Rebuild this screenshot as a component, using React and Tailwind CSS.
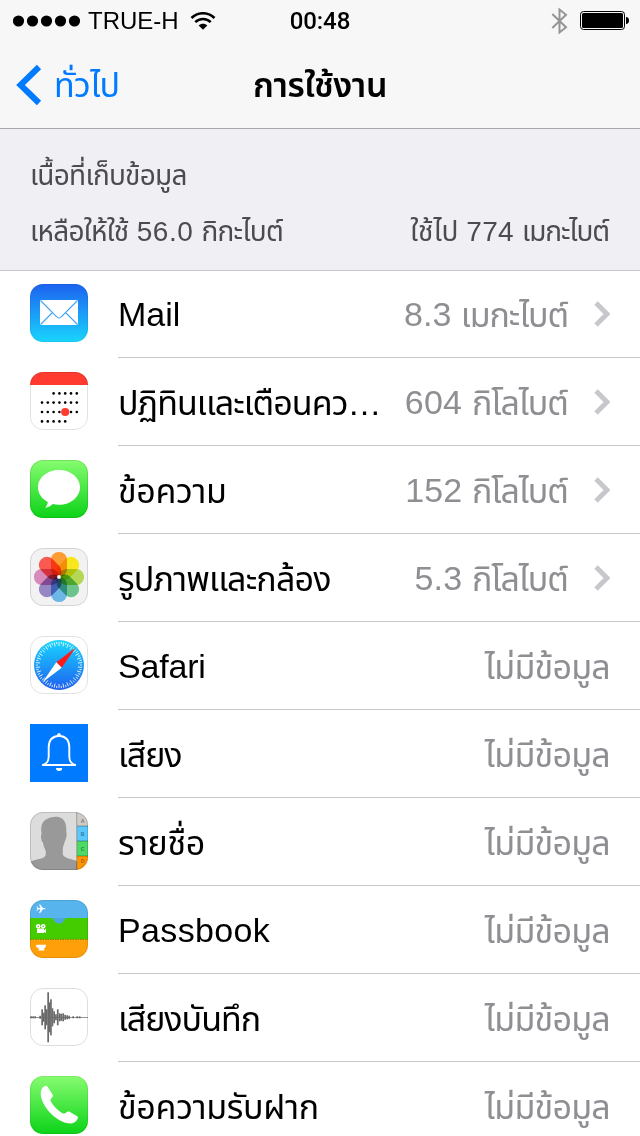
const R = 13;

function Tile({ id, children, outline, square }) {
  return (
    <svg width="58" height="58" viewBox="0 0 58 58" className="block shrink-0" aria-hidden="true">
      <defs>
        <clipPath id={`clip-${id}`}>
          <rect width="58" height="58" rx={square ? 0 : R} />
        </clipPath>
        <linearGradient id="green" x1="0" y1="0" x2="0" y2="1">
          <stop offset="0" stopColor="#87fc70" />
          <stop offset="1" stopColor="#0bd318" />
        </linearGradient>
        <linearGradient id="blue" x1="0" y1="0" x2="0" y2="1">
          <stop offset="0" stopColor="#1d62f0" />
          <stop offset="1" stopColor="#19d5fd" />
        </linearGradient>
        <linearGradient id="compass" x1="0" y1="0" x2="0" y2="1">
          <stop offset="0" stopColor="#19d7ff" />
          <stop offset="1" stopColor="#1e5fef" />
        </linearGradient>
      </defs>
      <g clipPath={`url(#clip-${id})`}>{children}</g>
      {outline && (
        <rect x="0.5" y="0.5" width="57" height="57" rx={R - 0.5} fill="none" stroke="#000" strokeOpacity={outline} />
      )}
    </svg>
  );
}

function MailIcon() {
  return (
    <Tile id="mail" outline={0.06}>
      <rect width="58" height="58" fill="url(#blue)" />
      <rect x="10" y="16" width="38" height="25" rx="1" fill="#fff" />
      <path d="M10.5 16.5 L26.5 32.5 Q29 35.5 31.5 32.5 L47.5 16.5 M10.5 40.5 L22.5 28.5 M47.5 40.5 L35.5 28.5" fill="none" stroke="#3fa4f6" strokeWidth="1.1" />
    </Tile>
  );
}

const CAL_ROWS = [
  [21.4, 2, 6],
  [30.6, 0, 6],
  [40, 0, 6],
  [49.4, 0, 4],
];

function CalendarIcon() {
  return (
    <Tile id="calendar" outline={0.11}>
      <rect width="58" height="58" fill="#fff" />
      {CAL_ROWS.flatMap(([y, from, to]) =>
        [0, 1, 2, 3, 4, 5, 6]
          .filter((c) => c >= from && c <= to)
          .map((c) => <circle key={`${y}-${c}`} cx={12 + c * 5.8} cy={y} r="1.3" fill="#000" />)
      )}
      <circle cx="35.2" cy="40" r="4.1" fill="#ff3b30" />
      <rect width="58" height="13" fill="#ff3b30" />
    </Tile>
  );
}

function MessagesIcon() {
  return (
    <Tile id="messages" outline={0.1}>
      <rect width="58" height="58" fill="url(#green)" />
      <path d="M29 10 C40.6 10 50 17.6 50 27.3 C50 37 40.6 44.8 29 44.8 C26.8 44.8 24.6 44.5 22.6 44 C21 45.8 18.6 47.6 15 47.7 C16.7 46.3 17.7 44 17.8 42.1 C12 39 8 33.6 8 27.3 C8 17.6 17.4 10 29 10 Z" fill="#fff" />
    </Tile>
  );
}

const PETALS = ["#fb9d32", "#f8e71e", "#b4d755", "#6cc48c", "#6cb7e6", "#9786c4", "#d88abb", "#fb5a52"];

function PhotosIcon() {
  return (
    <Tile id="photos" outline={0.12}>
      <rect width="58" height="58" fill="#f2f2f2" />
      <g className="isolate">
        {PETALS.map((c, i) => (
          <rect key={c} x="21" y="4" width="16" height="25" rx="7.6" fill={c} transform={`rotate(${i * 45} 29 29)`} className="mix-blend-multiply" />
        ))}
      </g>
      <circle cx="29" cy="29" r="1.9" fill="#fff" />
    </Tile>
  );
}

function SafariIcon() {
  return (
    <Tile id="safari" outline={0.11}>
      <rect width="58" height="58" fill="#fff" />
      <circle cx="29" cy="29" r="25" fill="url(#compass)" />
      {Array.from({ length: 60 }, (_, i) => (
        <line key={i} x1="29" y1="5.8" x2="29" y2={i % 2 ? 8 : 10} stroke="#fff" strokeWidth="0.8" transform={`rotate(${i * 6} 29 29)`} />
      ))}
      <path d="M45.5 11.7 L31.7 31.8 L26.3 26.3 Z" fill="#ff1a1a" />
      <path d="M12.5 46.3 L26.3 26.3 L31.7 31.8 Z" fill="#fff" />
    </Tile>
  );
}

function SoundsIcon() {
  return (
    <Tile id="sounds" square>
      <rect width="58" height="58" fill="#007aff" />
      <path d="M12.8 41 C17.5 39.5 18.7 37 18.7 32 V23.5 C18.7 16.5 22.5 12.3 29 11.8 C35.5 12.3 39.3 16.5 39.3 23.5 V32 C39.3 37 40.5 39.5 45.2 41 Z" fill="none" stroke="#fff" strokeWidth="1.9" strokeLinejoin="round" />
      <path d="M27 11.5 a2 2.5 0 0 1 4 0 Z" fill="#fff" />
      <path d="M26 44 h6.2 a3.1 3 0 0 1 -6.2 0 Z" fill="#fff" />
    </Tile>
  );
}

function ContactsIcon() {
  return (
    <Tile id="contacts" outline={0.14}>
      <rect width="58" height="58" fill="#dcdcdc" />
      <path d="M24 5 C31 3.5 37 8 36.3 19 C36 21 37.5 22 36.3 25 C35.9 28 35 28.5 34.3 31 C33.5 34 32.7 35 32.8 38 V42 C33 45 38 46.5 43 47.8 C46 48.6 47 49.5 48 50.5 V58 H0 V50.5 C3 47.8 9 47.5 12.5 46 C15.5 44.8 16 43.5 15.8 39 C14.5 36 13.5 34 13 30.5 C11.5 30 11.2 27 11 24.5 C10.7 23 11.6 23 11.6 22 C10 12 13 6 24 5 Z" fill="#999" />
      <rect x="47" y="0" width="11" height="14" fill="#cfccc7" />
      <rect x="47" y="14" width="11" height="15" fill="#5ac8fa" />
      <rect x="47" y="29" width="11" height="15" fill="#4cd964" />
      <rect x="47" y="44" width="11" height="14" fill="#ff9500" />
      <path d="M46.7 0 V58 M47 14 H58 M47 29 H58 M47 44 H58" stroke="#000" strokeOpacity="0.28" strokeWidth="1" />
      <g fontFamily="Liberation Sans, sans-serif" fontWeight="700" fontSize="5.2" textAnchor="middle" fillOpacity="0.75">
        <text x="52.5" y="11" fill="#555">A</text>
        <text x="52.5" y="24" fill="#15618c">B</text>
        <text x="52.5" y="39" fill="#146c24">C</text>
        <text x="52.5" y="51.3" fill="#8c4a00">D</text>
      </g>
    </Tile>
  );
}

function PassbookIcon() {
  return (
    <Tile id="passbook" outline={0.1}>
      <rect width="58" height="24" fill="#58b4ec" />
      <path d="M0 18 H22 C24 18 24 23.5 29 23.5 C34 23.5 34 18 36 18 H58 V40 H0 Z" fill="#44cc00" />
      <path d="M22 18 C24 18 24 23.5 29 23.5 C34 23.5 34 18 36 18 Z" fill="#4ba7dc" />
      <rect y="39" width="58" height="19" fill="#ffa00a" />
      <path d="M0 39.3 H58" stroke="#2e9a00" strokeWidth="1" strokeDasharray="1.5 1" />
      <path d="M6.5 5.5 L8.5 8 H10.5 L9 4.5 H10.2 L13 8 H15 Q16 8.5 15 9.2 H13 L10.2 13 H9 L10.5 9.2 H8.5 L6.5 11.5 L7.3 8.6 Z" fill="#fff" />
      <g fill="#fff">
        <circle cx="8.2" cy="26.2" r="2.3" />
        <circle cx="13.2" cy="26.2" r="2.3" />
        <rect x="7" y="28.5" width="7" height="4.6" rx="0.5" />
        <path d="M14 30.5 L16 28.6 V33.2 L14 31.8 Z" />
        <path d="M7.5 44.8 H16 C16 48 14 48 13.6 49.2 H14.5 V50.6 H8.5 V49.2 H9.5 C8.5 48.3 6 47.5 5.8 45.2 Z" />
      </g>
      <g fill="#44a800">
        <circle cx="8.2" cy="26.2" r="0.7" />
        <circle cx="13.2" cy="26.2" r="0.7" />
      </g>
    </Tile>
  );
}

const WAVE = [
  [1, 1], [3, 1], [5, 1], [10, 1.5], [12, 8], [13.6, 4.5], [15, 12], [16.5, 8], [18, 25], [19.4, 15], [20.8, 18], [22.3, 9],
  [24, 6], [25.8, 3], [27.6, 8], [29.4, 4], [31, 3.5], [33, 4], [35, 2.5], [37, 2], [39, 1.6], [43, 1], [47, 1], [49.5, 1],
];

function VoiceMemosIcon() {
  return (
    <Tile id="voice" outline={0.13}>
      <rect width="58" height="58" fill="#fff" />
      <path d="M0 29.5 H58" stroke="#777" strokeWidth="0.8" />
      {WAVE.map(([x, h]) => (
        <rect key={x} x={x - 0.7} y={29.3 - h} width="1.7" height={h * 2} fill="#6a6a6a" />
      ))}
    </Tile>
  );
}

function PhoneIcon() {
  return (
    <Tile id="phone" outline={0.07}>
      <rect width="58" height="58" fill="url(#green)" />
      <path d="M14.8 10 C16 9.6 17 10 17.7 11 L22.6 18.5 C23.3 19.6 22.9 20.9 21.9 21.7 C20.5 22.9 20 24 20.9 25.6 C23.5 30.3 27 33.9 31.6 36.7 C33.5 37.9 34.9 37.9 36.2 36.6 C37.4 35.4 38.7 35.2 40 36 L46.8 40 C47.9 40.7 48.2 41.8 47.6 42.9 C45.5 46.8 41.5 48.4 36.8 47.1 C24.8 43.8 12.9 31.4 11 20.2 C10.2 15.7 11.4 11.5 14.8 10 Z" fill="#fff" />
    </Tile>
  );
}

function SignalIcon() {
  return (
    <svg width="68" height="12" viewBox="0 0 68 12" className="block" aria-hidden="true">
      {[0, 1, 2, 3, 4].map((i) => (
        <circle key={i} cx={5.5 + i * 14} cy="6" r="5.6" />
      ))}
    </svg>
  );
}

function WifiIcon() {
  return (
    <svg width="26" height="18" viewBox="0 0 26 18" className="block" fill="none" stroke="#000" strokeWidth="2.6" aria-hidden="true">
      <path d="M1.5 6 C8 -0.3 18 -0.3 24.5 6" />
      <path d="M5.3 10.2 C9.5 6 16.5 6 20.7 10.2" />
      <path d="M8.7 13.5 C11 11 15 11 17.3 13.5 L13 17.8 Z" fill="#000" stroke="none" />
    </svg>
  );
}

function BluetoothIcon() {
  return (
    <svg width="17" height="28" viewBox="0 0 17 28" className="block" fill="none" stroke="#959595" strokeWidth="2" aria-hidden="true">
      <path d="M1.3 7 L15 20.2 L8.5 25.5 V2.5 L15 7.8 L1.3 21" />
    </svg>
  );
}

function BatteryIcon() {
  return (
    <svg width="49" height="20" viewBox="0 0 49 20" className="block" aria-hidden="true">
      <rect x="0.5" y="0.5" width="44" height="18" rx="3" fill="none" stroke="#000" />
      <rect x="2" y="2" width="41" height="15" rx="1.5" />
      <path d="M46 6 C48 6 49 7.5 49 9.5 C49 11.5 48 13 46 13 Z" />
    </svg>
  );
}

const NO_DATA = { unit: "ไม่มีข้อมูล", unitClass: "tracking-[-0.75px]" };
const KILO = { unit: "กิโลไบต์", unitClass: "pr-0.5 tracking-[-1px]" };
const MEGA = { unit: "เมกะไบต์", unitClass: "pr-0.5 tracking-[-1.1px]" };

const ROWS = [
  { name: "Mail", amount: "8.3", ...MEGA, Icon: MailIcon, more: true },
  { name: "ปฏิทินและเตือนคว…", nameClass: "pt-0.5 tracking-[-0.95px]", amount: "604", amountClass: "tracking-[0.25px]", ...KILO, Icon: CalendarIcon, more: true },
  { name: "ข้อความ", nameClass: "pt-0.5 tracking-[-0.3px]", amount: "152", amountClass: "tracking-[0.1px]", ...KILO, Icon: MessagesIcon, more: true },
  { name: "รูปภาพและกล้อง", nameClass: "pt-0.5 tracking-[-0.83px]", amount: "5.3", amountClass: "tracking-[0.2px]", ...KILO, Icon: PhotosIcon, more: true },
  { name: "Safari", nameClass: "tracking-[-0.2px]", ...NO_DATA, Icon: SafariIcon },
  { name: "เสียง", nameClass: "pt-0.5 tracking-[-1px]", ...NO_DATA, Icon: SoundsIcon },
  { name: "รายชื่อ", nameClass: "pt-0.5 tracking-[-0.4px]", ...NO_DATA, Icon: ContactsIcon },
  { name: "Passbook", nameClass: "tracking-[0.35px]", ...NO_DATA, Icon: PassbookIcon },
  { name: "เสียงบันทึก", nameClass: "pt-0.5 tracking-[-1px]", ...NO_DATA, Icon: VoiceMemosIcon },
  { name: "ข้อความรับฝาก", nameClass: "pt-0.5 tracking-[-0.27px]", ...NO_DATA, Icon: PhoneIcon },
];

function Row({ name, nameClass = "", amount, amountClass = "", unit, unitClass, Icon, more }) {
  return (
    <li className="flex h-[88px] shrink-0 pl-[30px]">
      <div className="pt-[14px]">
        <Icon />
      </div>
      <div className="ml-[30px] flex flex-1 items-center justify-between border-b border-[#c8c7cc] pr-[30px] text-[34px] leading-[48px] whitespace-nowrap">
        <span className={`text-black ${nameClass}`}>{name}</span>
        <span className="flex items-center text-[#8e8e93]">
          {amount && <span className={`whitespace-pre ${amountClass}`}>{`${amount} `}</span>}
          <span className={`pt-0.5 ${unitClass}`}>{unit}</span>
          {more && (
            <svg width="17" height="28" viewBox="0 0 17 28" className="mt-px ml-[23px] block" aria-hidden="true">
              <path d="M3 3 L14 14 L3 25" fill="none" stroke="#c7c7cc" strokeWidth="4.8" />
            </svg>
          )}
        </span>
      </div>
    </li>
  );
}

export default function App() {
  return (
    <div className="flex h-[1136px] w-[640px] flex-col overflow-hidden bg-white font-['Liberation_Sans','Noto_Sans_Thai','Noto_Sans',sans-serif]">
      <header className="h-[129px] shrink-0 border-b border-[#a7a7ac] bg-[#f7f7f7]">
        <div className="grid h-[41px] grid-cols-3 items-center pr-[11px] pl-[13px]">
          <div className="flex items-center">
            <SignalIcon />
            <span className="ml-[7px] pt-px text-[24px] leading-6 whitespace-nowrap">TRUE-H</span>
            <span className="ml-[11px]">
              <WifiIcon />
            </span>
          </div>
          <span className="pr-[2px] text-center font-['Roboto',sans-serif] text-[24px] leading-6 font-medium tracking-[-0.1px]">00:48</span>
          <div className="flex items-center justify-end gap-3">
            <BluetoothIcon />
            <BatteryIcon />
          </div>
        </div>
        <div className="grid h-[87px] grid-cols-3 items-center px-4 text-[34px] leading-[48px] whitespace-nowrap">
          <a className="flex items-center text-[#007aff]">
            <svg width="26" height="42" viewBox="0 0 26 42" className="mr-[12px] block" aria-hidden="true">
              <path d="M23 3 L4.5 21 L23 39" fill="none" stroke="#007aff" strokeWidth="6" />
            </svg>
            <span className="tracking-[-0.65px]">ทั่วไป</span>
          </a>
          <h1 className="text-center font-semibold tracking-[-0.4px]">การใช้งาน</h1>
        </div>
      </header>
      <section className="h-[141px] shrink-0 bg-[#efeff4] px-[30px] pt-[27px] text-[28px] leading-[40px] text-[#4c4c50]">
        <p className="tracking-[-0.75px]">เนื้อที่เก็บข้อมูล</p>
        <div className="mt-4 flex justify-between">
          <span className="tracking-[-0.75px]">
            เหลือให้ใช้<span className="tracking-[0.5px]"> 56.0 </span>กิกะไบต์
          </span>
          <span className="pr-px">
            ใช้ไป <span className="tracking-[0.3px]">774 </span>
            <span className="tracking-[-1.1px]">เมกะไบต์</span>
          </span>
        </div>
      </section>
      <ul className="flex flex-col shadow-[inset_0_1px_0_#c8c7cc]">
        {ROWS.map((row) => (
          <Row key={row.name} {...row} />
        ))}
      </ul>
    </div>
  );
}
